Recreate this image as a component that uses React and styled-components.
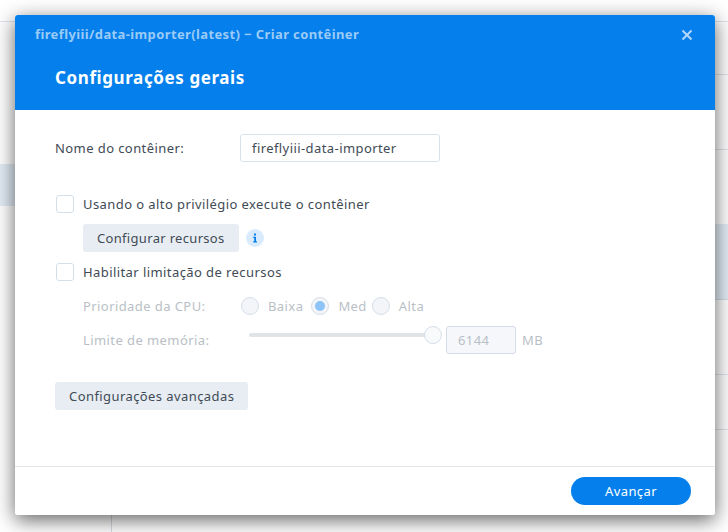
import React from "react";
import styled, { createGlobalStyle } from "styled-components";

const Page = createGlobalStyle`
  html, body { margin: 0; padding: 0; }
  body {
    width: 728px;
    height: 532px;
    overflow: hidden;
    background: #fff;
    font-family: "Noto Sans", "DejaVu Sans", sans-serif;
    letter-spacing: 0.42px;
  }
`;

const Desk = styled.div`
  position: relative;
  width: 728px;
  height: 532px;
  overflow: hidden;
  padding: 15px 13px 17px 15px;
  box-sizing: border-box;
`;

// rows of the window behind the dialog, only their edges show
const BackLine = styled.div`
  position: absolute;
  left: ${(p) => p.$left || 0}px;
  right: ${(p) => p.$right || 0}px;
  top: ${(p) => p.$top}px;
  height: ${(p) => p.$h || 1}px;
  background: ${(p) => p.$color || "#dfe5ec"};
`;

const BackColumn = styled.div`
  position: absolute;
  left: 111px;
  top: 510px;
  bottom: 0;
  width: 1px;
  background: #d8dde3;
`;

const Dialog = styled.div`
  position: relative;
  height: 100%;
  display: flex;
  flex-direction: column;
  background: #fff;
  border-radius: 3px;
  overflow: hidden;
`;

const DialogShadow = styled.div`
  position: relative;
  height: 100%;
  border-radius: 3px;
  box-shadow: 0 5px 20px rgba(0, 0, 0, 0.62);
`;

const Header = styled.div`
  height: 95px;
  flex: none;
  background: #057feb;
  padding: 0 40px;
  position: relative;
`;

const Caption = styled.div`
  margin-left: -20px;
  padding-top: 10px;
  line-height: 18px;
  font-size: 13px;
  font-weight: 700;
  letter-spacing: 0.38px;
  color: #9bcbf7;
`;

const Title = styled.h1`
  margin: 23px 0 0;
  font-size: 17px;
  line-height: 24px;
  font-weight: 700;
  letter-spacing: 0.6px;
  color: #fff;
`;

const Close = styled.svg`
  position: absolute;
  right: 22px;
  top: 14px;
`;

const Body = styled.div`
  flex: 1;
  padding: 24px 40px 0;
  font-size: 13px;
  color: #414b55;
`;

const Row = styled.div`
  display: flex;
  align-items: center;
  height: 28px;
  margin-top: ${(p) => p.$top || 0}px;
  padding-left: ${(p) => p.$indent || 0}px;
  color: ${(p) => (p.$off ? "#b9bfc6" : "inherit")};
`;

const Label = styled.span`
  width: ${(p) => p.$w}px;
  flex: none;
`;

const Unit = styled.span`
  margin-left: 6px;
`;

const TextBox = styled.div`
  box-sizing: border-box;
  width: ${(p) => p.$w}px;
  height: 28px;
  line-height: 26px;
  padding: 0 11px;
  border: 1px solid ${(p) => (p.$off ? "#d5dee8" : "#d9e2ea")};
  border-radius: 3px;
  background: ${(p) => (p.$off ? "#f5f7fa" : "#fff")};
`;

const Check = styled.span`
  box-sizing: border-box;
  width: 18px;
  height: 18px;
  margin: 0 9px 0 1px;
  flex: none;
  border: 1px solid #d5dfe9;
  border-radius: 3px;
  background: #fff;
`;

const Button = styled.div`
  box-sizing: border-box;
  height: 28px;
  line-height: 28px;
  padding: 0 14px;
  border-radius: 3px;
  background: #e8edf4;
  color: #414b55;
  letter-spacing: ${(p) => p.$spacing || 0.42}px;
`;

const Info = styled.svg`
  margin-left: 7px;
`;

const Radio = styled.span`
  box-sizing: border-box;
  display: flex;
  align-items: center;
  justify-content: center;
  width: 18px;
  height: 18px;
  flex: none;
  margin: 0 ${(p) => p.$gap}px 0 ${(p) => p.$before || 0}px;
  border: 1px solid #d5dee8;
  border-radius: 50%;
  background: #f3f5f9;
`;

const RadioDot = styled.span`
  width: 10px;
  height: 10px;
  border-radius: 50%;
  background: #8cc4f8;
`;

const Slider = styled.div`
  position: relative;
  width: 184px;
  height: 4px;
  margin: 0 13px 10px 0;
  border-radius: 2px;
  background: #e0e4e7;
`;

const Knob = styled.span`
  position: absolute;
  right: -9px;
  top: -7px;
  box-sizing: border-box;
  width: 18px;
  height: 18px;
  border: 1px solid #d5dee8;
  border-radius: 50%;
  background: #f8fafc;
`;

const Footer = styled.div`
  height: 48px;
  flex: none;
  display: flex;
  align-items: center;
  justify-content: flex-end;
  padding: 0 24px;
  border-top: 1px solid #e4e6e9;
`;

const Primary = styled.div`
  width: 120px;
  height: 28px;
  line-height: 28px;
  text-align: center;
  border-radius: 14px;
  background: #057feb;
  color: #fff;
  font-size: 13px;
`;

export default function App() {
  return (
    <Desk>
      <Page />
      <BackLine $top={21} />
      <BackLine $top={74} $left={700} />
      <BackLine $top={149} $left={700} />
      <BackLine $top={224} $left={700} $h={75} $color="#e3edf6" />
      <BackLine $top={299} $left={700} $color="#d5dde6" />
      <BackLine $top={374} $left={700} />
      <BackLine $top={429} $left={700} />
      <BackLine $top={164} $right={700} $h={42} $color="#e3edf6" />
      <BackColumn />
      <DialogShadow>
        <Dialog>
          <Header>
            <Caption>fireflyiii/data-importer(latest) − Criar contêiner</Caption>
            <Title>Configurações gerais</Title>
            <Close width="12" height="12" viewBox="0 0 12 12">
              <path d="M1.5 1.5L10.5 10.5M10.5 1.5L1.5 10.5" stroke="#b5d9fa" strokeWidth="2" fill="none" />
            </Close>
          </Header>
          <Body>
            <Row>
              <Label $w={185}>Nome do contêiner:</Label>
              <TextBox $w={200}>fireflyiii-data-importer</TextBox>
            </Row>
            <Row $top={28}>
              <Check />
              Usando o alto privilégio execute o contêiner
            </Row>
            <Row $top={6} $indent={28}>
              <Button $spacing={0.32}>Configurar recursos</Button>
              <Info width="18" height="18" viewBox="0 0 18 18">
                <circle cx="9" cy="9" r="9" fill="#d9ebfd" />
                <rect x="8" y="4.5" width="2" height="2" fill="#057feb" />
                <path d="M7.2 7.8H10V12.2H11V13.4H7.2V12.2H8.2V9H7.2Z" fill="#057feb" />
              </Info>
            </Row>
            <Row $top={6}>
              <Check />
              Habilitar limitação de recursos
            </Row>
            <Row $top={6} $indent={28} $off>
              <Label $w={158}>Prioridade da CPU:</Label>
              <Radio $gap={9} />
              Baixa
              <Radio $gap={9} $before={8}>
                <RadioDot />
              </Radio>
              Med
              <Radio $gap={9} $before={5} />
              Alta
            </Row>
            <Row $top={6} $indent={28} $off>
              <Label $w={166}>Limite de memória:</Label>
              <Slider>
                <Knob />
              </Slider>
              <TextBox $w={70} $off>6144</TextBox>
              <Unit>MB</Unit>
            </Row>
            <Row $top={28}>
              <Button>Configurações avançadas</Button>
            </Row>
          </Body>
          <Footer>
            <Primary>Avançar</Primary>
          </Footer>
        </Dialog>
      </DialogShadow>
    </Desk>
  );
}
